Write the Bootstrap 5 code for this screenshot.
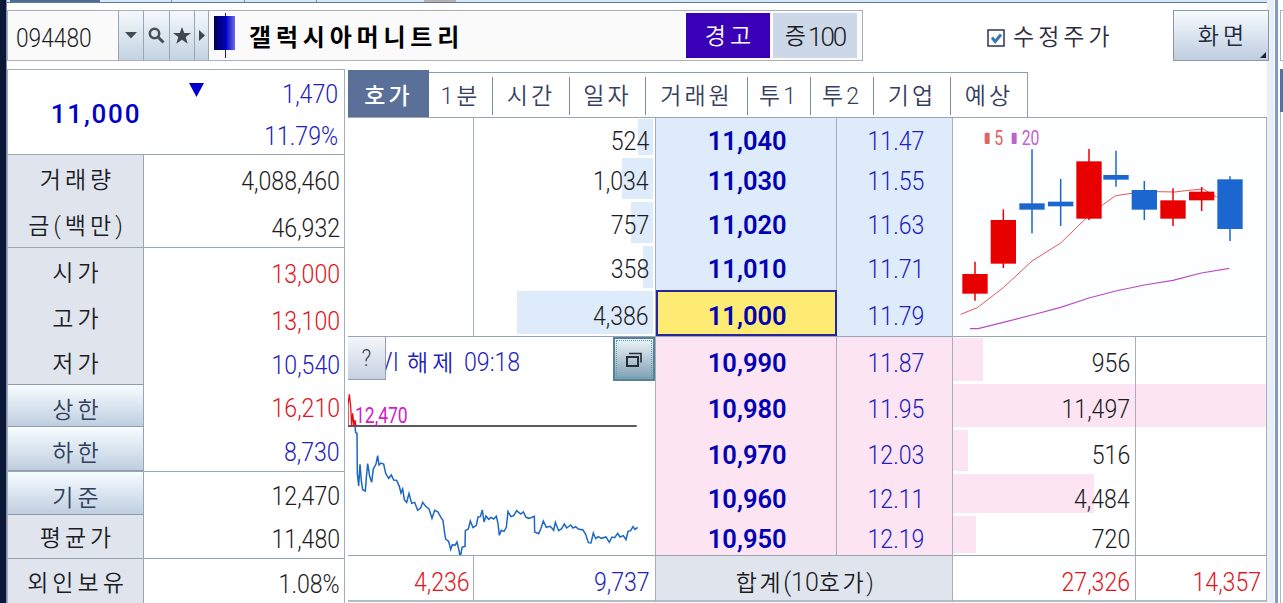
<!DOCTYPE html>
<html lang="ko">
<head>
  <meta charset="UTF-8">
  <title>갤럭시아머니트리 호가</title>
  <link href="https://cdn.jsdelivr.net/npm/bootstrap@5.3.0/dist/css/bootstrap.min.css" rel="stylesheet">
  <style>
    body {
        width: 1283px;
        height: 603px;
        overflow: hidden;
        background: #fff;
        color: #1b1c24;
        font-family: Roboto, "Noto Sans CJK KR", sans-serif;
        font-size: 26px;
        font-weight: 300;
        line-height: 30px;
    }

    svg { display: block; }

    .edge { width: 7px; background: #0b1736; border-right: 1px solid #7d8ba8; }
    .main { width: 1260px; }

    .top-strip { height: 3px; background: #d5e6f7; border-bottom: 1px solid #5f7c9f; }
    .top-strip .on { width: 90px; margin-left: 3px; background: #4f6d92; }
    .top-strip .tick { width: 1px; background: #8295ac; }

    .ko { font-size: 23px; font-weight: 350; letter-spacing: 4px; margin-right: -4px; white-space: nowrap; }
    .num { display: inline-block; transform: scaleX(.89); transform-origin: center; white-space: nowrap; }
    .num-end { transform-origin: right; }
    .num-start { transform-origin: left; }
    .up { color: #e0141c; }
    .down { color: #2222bb; }

    /* search bar */
    .bar { height: 51px; margin-top: 7px; }
    .item-box { width: 856px; border: 1px solid #a9b0b8; background: #fafafa; }
    .code { width: 110px; padding-left: 8px; }
    .tool {
        border-left: 1px solid #9aa6b4;
        background: linear-gradient(#f4f8fb, #c3d3e2);
    }
    .item-name { font-weight: 700; color: #000; margin-left: 13px; font-size: 24px; letter-spacing: 4.8px; }
    .flag-warn { width: 84px; height: 45px; padding-top: 2px; background: #3a00b8; color: #fff; margin-right: 3px; }
    .flag-rate { width: 84px; height: 45px; padding-top: 2px; background: #ccd8e7; margin-right: 5px; }
    .adjust { margin-left: 124px; color: #2c2c40; }
    .screen-btn {
        width: 96px;
        margin-left: auto;
        padding-top: 2px;
        border: 1px solid #8b98a8;
        background: linear-gradient(#f6fbfd, #bfcde0);
        color: #20283c;
        position: relative;
    }
    .screen-btn svg { position: absolute; right: 2px; bottom: 2px; }

    /* summary column */
    .summary { width: 338px; height: 534px; margin-top: 8px; border: 1px solid #a4adba; border-bottom: 0; }
    .quote { height: 84px; }
    .quote .price { width: 178px; color: #0000c8; font-weight: 500; letter-spacing: 1.8px; padding: 4px 2px 0 0; }
    .quote .arrow { width: 20px; padding: 13px 0 0 2px; }
    .quote .diff { padding: 3px 6px 0 0; line-height: 42px; }
    .sum-row { border-top: 1px solid transparent; }
    .sum-row.line { border-top-color: #9aa5b4; }
    .sum-row:not(.line) .sum-label { margin-top: -1px; }
    .sum-label { width: 136px; background: #e0e4ed; border-right: 1px solid #9aa5b4; }
    .sum-label.push { padding-top: 11px; background: linear-gradient(#f7fdff, #bfcee0); border-bottom: 1px solid #8f9bab; color: #30405c; }
    .sum-label.edge-top { border-top: 1px solid #8f9bab; }
    .sum-value { padding-right: 4px; }

    /* tabs */
    .board { width: 919px; margin: 10px 0 0 3px; }
    .board-tabs { height: 47px; border-bottom: 1px solid #9aa5b4; }
    .board-tab { height: 45px; margin-top: 1px; padding-top: 4px; border-top: 1px solid #8f9bb0; color: #34405e; }
    .board-tab .inner { height: 38px; border-right: 1px solid #7d8a9c; }
    .board-tab .ko { letter-spacing: 3px; margin-right: 0; padding-top: 1px; }
    .board-tab:last-child { border-right: 1px solid #8f9bb0; }
    .board-tab:last-child .inner { border-right: 0; }
    .board-tab.on { height: 47px; margin-top: -1px; border: 0; background: #5a7098; color: #fff; }
    .board-tab.on .inner { border: 0; padding-top: 4px; height: 41px; }
    .board-tab.on .ko { font-weight: 500; }

    /* order book */
    .bdr { border-right: 1px solid #a5aebb; }
    .half { height: 219px; border-bottom: 1px solid #9aa5b4; }
    .total { height: 46px; border-bottom: 2px solid #b3bccb; padding-top: 11px; }
    .col-l { width: 308px; }
    .col-m { width: 297px; }
    .col-r { width: 314px; }
    .lv { padding-top: 9px; }
    .lv:first-child { padding-top: 8px; }
    .lv:last-child { padding-top: 11px; }
    .bid .lv, #bidQty .lv { padding-top: 11px; }
    .bid .lv:last-child, #bidQty .lv:last-child { padding-top: 9px; }
    .qty { position: relative; z-index: 0; }
    .qty .fill { position: absolute; z-index: -1; top: 1px; bottom: 2px; }
    .ask-fill { right: 2px; background: #deebfa; }
    .bid-fill { left: 0; background: #fce4f2; }
    .ask { background: #deebfa; }
    .bid { background: #fce4f2; }
    .pr { color: #0000b4; font-weight: 600; }
    .pr .num { transform: translateX(1px) scaleX(.98); }
    .pct .num { transform: translateX(1px) scaleX(.89); }
    .now { background: #fdeb73; border: 2px solid #26269c; margin: 0 -1px 0 0; position: relative; z-index: 1; }
    .lv.now:last-child { padding-top: 9px; }
    .help-btn {
        width: 38px;
        height: 43px;
        background: linear-gradient(#f4f7fb, #c6d1e1);
        border: solid #94a0b0;
        border-width: 0 1px 1px 0;
        color: #3c4450;
        font-size: 24px;
        position: relative;
    }
    .pop-btn { width: 42px; height: 44px; border: 2px solid #5b7f95; background: linear-gradient(#eef4f8, #7fa0b4); }
    .pop-btn .dots { border: 1px dotted #3fa9bd; }

    /* divider and the neighbouring panel */
    .side { width: 16px; }
    .side .gap-strip { width: 7px; background: #e9eff7; }
    .side .rail { width: 3px; margin: 0 2px 0 1px; background: #8199cb; }
    .side .next { width: 3px; padding-top: 10px; }
    .side .next-bar { height: 51px; border: 1px solid #a9b0b8; border-right: 0; }
    .side .next-tab { height: 43px; margin-top: 8px; background: #5a7098; }
    .side .next-body { height: 491px; border-left: 1px solid #b0b6c0; }
  </style>
</head>
<body class="d-flex">
<div class="edge flex-shrink-0"></div>

<div class="main flex-shrink-0">
  <div class="top-strip d-flex">
    <div class="on"></div>
    <div class="tick" style="margin-left: 71px"></div>
    <div class="tick" style="margin-left: 72px"></div>
    <div class="tick" style="margin-left: 71px"></div>
    <div style="margin-left: 107px; width: 32px; background: #b5b2ae"></div>
  </div>

  <div class="bar d-flex" style="width: 1262px">
    <div class="item-box d-flex align-items-stretch">
      <div class="code d-flex align-items-center pt-1"><span class="num num-start" style="transform: scaleX(.875)">094480</span></div>
      <div class="tool d-flex align-items-center justify-content-center" style="width: 25px">
        <svg width="12" height="7"><path d="M0 0h12L6 6.500z" fill="#454b52"/></svg>
      </div>
      <div class="tool d-flex align-items-center justify-content-center" style="width: 26px">
        <svg width="17" height="17" fill="none" stroke="#4a5057"><circle cx="6.500" cy="6.500" r="4.700" stroke-width="2.500"/><path d="M10 10l5.500 5.500" stroke-width="3"/></svg>
      </div>
      <div class="tool d-flex align-items-center justify-content-center" style="width: 25px">
        <svg width="18" height="17"><path d="M9 0l2.300 6H18l-5.300 4 2 6.700L9 12.700 3.300 16.700l2-6.700L0 6h6.700z" fill="#40464e"/></svg>
      </div>
      <div class="tool d-flex align-items-center justify-content-center" style="width: 15px; border-right: 1px solid #9aa6b4">
        <svg width="6" height="11"><path d="M0 0v11L6 5.500z" fill="#40464e"/></svg>
      </div>
      <svg style="margin-left: 5px" width="22" height="49">
        <defs><linearGradient id="candle"><stop offset="0" stop-color="#00004e"/><stop offset=".55" stop-color="#0000c0"/><stop offset="1" stop-color="#6a6ae8"/></linearGradient></defs>
        <path d="M11.500 2v45" stroke="#1414d0"/>
        <rect y="5" width="21" height="34" fill="url(#candle)"/>
      </svg>
      <div class="ko item-name align-self-center pt-1">갤럭시아머니트리</div>
      <div class="flag-warn ms-auto align-self-center d-flex align-items-center justify-content-center"><span class="ko">경고</span></div>
      <div class="flag-rate align-self-center d-flex align-items-center justify-content-center">
        <span class="ko" style="margin: 0 2px 0 0; letter-spacing: 0">증</span><span style="letter-spacing: -2px">100</span>
      </div>
    </div>
    <div class="adjust d-flex align-items-center pt-1">
      <svg width="18" height="18" fill="none"><rect x="1" y="1" width="16" height="16" stroke="#39415a" stroke-width="1.600"/><path d="M5 8.500l3.200 4L14 5.500" stroke="#3579b4" stroke-width="3"/></svg>
      <span class="ko ms-2">수정주가</span>
    </div>
    <div class="screen-btn d-flex align-items-center justify-content-center">
      <span class="ko">화면</span>
      <svg width="6" height="6"><path d="M6 0v6H0z" fill="#1c2434"/></svg>
    </div>
  </div>

  <div class="d-flex">
    <div class="summary flex-shrink-0 d-flex flex-column">
      <div class="quote d-flex flex-shrink-0">
        <div class="price d-flex align-items-center justify-content-center">11,000</div>
        <div class="arrow"><svg width="17" height="15"><path d="M1 0h15L8.500 14z" fill="#0000cc"/></svg></div>
        <div class="diff down ms-auto text-end"><div class="num num-end d-block">1,470</div><div class="num num-end d-block">11.79%</div></div>
      </div>
      <div id="summaryRows"></div>
    </div>

    <div class="board flex-shrink-0">
      <div class="board-tabs d-flex" id="boardTabs"></div>

      <div class="d-flex">
        <div class="col-l bdr">
          <div class="half d-flex">
            <div class="bdr" style="width: 126px"></div>
            <div class="flex-grow-1" id="askQty"></div>
          </div>
          <div class="half">
            <div class="d-flex" style="height: 44px; line-height: 48px">
              <div class="help-btn d-flex align-items-center justify-content-center"><span class="num">?</span></div>
              <div class="down" style="margin-left: -8px; padding-top: 1px; z-index: -1"><span class="num num-start" style="letter-spacing: .5px">VI</span><span class="ko" style="margin-left: 5px">해제</span><span class="num num-start" style="margin-left: 11px">09:18</span></div>
              <div class="pop-btn ms-auto d-flex" style="padding: 1px">
                <div class="dots flex-grow-1 d-flex align-items-center justify-content-center">
                  <svg width="16" height="15" fill="none" stroke="#252d36"><rect x="1" y="5" width="11" height="9" stroke-width="2"/><path d="M3 1.500h12v9" stroke-width="1.600"/></svg>
                </div>
              </div>
            </div>
            <svg width="307" height="174" viewBox="9 -12 921 522" fill="none">
              <path d="M9 123H875" stroke="#222" stroke-width="4"/>
              <path d="M9 123V60l4-32 4 35 3 60 3-38 4 38 3-18 3 18" stroke="#e01018" stroke-width="4"/>
              <path d="M30 123l2 20 4 2 1 120 4 38 4-65 4 50 4 26 8 4 3-40 4-42 6 38 6 18 5-40 8-15 5-25 4 28 6-6 8 3 6 28 9 15 8-10 7 15 9 1 8 18 5 20 5-12 5 32 7 8 7-27 8 30 9-3 9 24 9-7 6-17 9 12 10 8 9 28 8-24 10 5 9 17 6 8 4 32 4 24 9 7 6 24 5-14 8 2 6-10 6 25 4 23 5-32 9-3 1-47 9-5 6-24 8 20 10-7 5-25 7-1 6-20 5 36 6-18 8 10 7-6 8 5 8-8 5 22 4 35 6-15 8 3 7-12 5-47 9 15 8-3 9-15 12 10 8-6 8 16 9 3 16-6 1 47 12 5 7-16 7-22 9 19 12-3 10 12 5-24 10 25 9-6 8-14 7 12 12-9 7 9 8-4 8 7 14 3 8 13 8 25 8 1 7-30 7 17 8-6 9 5 14-4 10 16 8-16 8 2 9-13 7 11 10-4 8 12 6-25 8-2 7-12 6 8 8-6" stroke="#1c66c4" stroke-width="4.500"/>
              <text x="30" y="113" font-size="64" font-weight="400" fill="#d21cc8" textLength="158" lengthAdjust="spacingAndGlyphs">12,470</text>
            </svg>
          </div>
          <div class="total d-flex">
            <div class="bdr text-end up" style="width: 126px; margin-top: -11px; padding: 11px 3px 0 0"><span class="num num-end">4,236</span></div>
            <div class="flex-grow-1 text-end down" style="padding-right: 5px"><span class="num num-end">9,737</span></div>
          </div>
        </div>

        <div class="col-m bdr">
          <div class="half ask d-flex">
            <div class="bdr" style="width: 181px" id="askPrice"></div>
            <div class="flex-grow-1" id="askRate"></div>
          </div>
          <div class="half bid d-flex">
            <div class="bdr" style="width: 181px" id="bidPrice"></div>
            <div class="flex-grow-1" id="bidRate"></div>
          </div>
          <div class="total text-center" style="background: #e0e4ed"><span class="ko" style="letter-spacing: 2.500px">합계<span style="letter-spacing: 0; font-size: 25px; font-weight: 300">(10</span>호가)</span></div>
        </div>

        <div class="col-r bdr">
          <div class="half">
            <svg width="313" height="218" viewBox="9 9 939 654" style="background: #fdfeff">
              <rect x="104" y="53" width="15" height="34" rx="3" fill="#e06464"/>
              <text x="133" y="89" font-size="58" font-weight="400" fill="#e06464" textLength="27" lengthAdjust="spacingAndGlyphs">5</text>
              <rect x="185" y="53" width="15" height="34" rx="3" fill="#bf62cc"/>
              <text x="215" y="89" font-size="58" font-weight="400" fill="#bf62cc" textLength="53" lengthAdjust="spacingAndGlyphs">20</text>
              <path d="M32 598L82 578 160 518 246 438 332 384 410 308 460 268 497 242 545 235 625 230 675 231 715 226 760 222 800 246" fill="none" stroke="#e05a5a" stroke-width="3"/>
              <path d="M60 641H84L160 622 246 600 332 577 417 549 497 528 583 510 669 496 754 474 838 460" fill="none" stroke="#b84cc4" stroke-width="3.500"/>
              <g id="candles"></g>
            </svg>
          </div>
          <div class="half" style="position: relative">
            <div id="bidQty" class="h-100"></div>
            <div style="position: absolute; left: 182px; top: 0; bottom: 0; border-left: 1px solid #a5aebb"></div>
          </div>
          <div class="total d-flex up">
            <div class="bdr text-end" style="width: 183px; margin-top: -11px; padding: 11px 5px 0 0"><span class="num num-end">27,326</span></div>
            <div class="flex-grow-1 text-end" style="padding-right: 5px"><span class="num num-end">14,357</span></div>
          </div>
        </div>
      </div>
    </div>
  </div>
</div>

<div class="side flex-shrink-0 d-flex">
  <div class="gap-strip flex-shrink-0"></div>
  <div class="rail flex-shrink-0"></div>
  <div class="next flex-shrink-0">
    <div class="next-bar"></div>
    <div class="next-tab"></div>
    <div class="next-body"></div>
  </div>
</div>

<script src="https://cdn.jsdelivr.net/npm/bootstrap@5.3.0/dist/js/bootstrap.bundle.min.js"></script>
<script>
  // label, value, row height, value class, pressed-button label, rule above
  const summary = [
      ['거래량', '4,088,460', 49, '', false, true],
      ['금(백만)', '46,932', 44, '', false, false],
      ['시가', '13,000', 48, 'up', false, true],
      ['고가', '13,100', 46, 'up', false, false],
      ['저가', '10,540', 43, 'down', false, false],
      ['상한', '16,210', 43, 'up', true, false],
      ['하한', '8,730', 44, 'down', true, false],
      ['기준', '12,470', 44, '', true, true],
      ['평균가', '11,480', 43, '', false, false],
      ['외인보유', '1.08%', 46, '', false, true]
  ];

  const tabs = [['호가', 81], ['1분', 64], ['시간', 77], ['일자', 76], ['거래원', 102], ['투1', 63], ['투2', 63], ['기업', 77], ['예상', 77]];

  // price, rate, quantity, bar width, row height
  const asks = [
      ['11,040', '11.47', '524', 15, 39],
      ['11,030', '11.55', '1,034', 31, 44],
      ['11,020', '11.63', '757', 22, 44],
      ['11,010', '11.71', '358', 10, 45],
      ['11,000', '11.79', '4,386', 136, 46]
  ];
  const bids = [
      ['10,990', '11.87', '956', 30, 46],
      ['10,980', '11.95', '11,497', 313, 46],
      ['10,970', '12.03', '516', 15, 44],
      ['10,960', '12.11', '4,484', 141, 42],
      ['10,950', '12.19', '720', 23, 40]
  ];

  // center x, high, body top, body bottom, low, color
  const red = '#e80000', blue = '#1c66d0';
  const candles = [
      [75, 440, 477, 536, 557, red],
      [160, 283, 315, 446, 459, red],
      [246, 103, 265, 284, 355, blue],
      [332, 192, 260, 274, 333, blue],
      [417, 102, 139, 311, 315, red],
      [498, 107, 180, 194, 215, blue],
      [583, 198, 225, 284, 315, blue],
      [669, 220, 256, 311, 333, red],
      [755, 216, 230, 256, 288, red],
      [840, 184, 193, 342, 378, blue]
  ];

  function fill(id, html) {
      document.getElementById(id).innerHTML = html;
  }

  fill('summaryRows', summary.map(([label, value, h, cls, push, line]) => `
      <div class="sum-row d-flex ${line ? 'line' : ''}" style="height: ${h}px">
          <div class="sum-label d-flex align-items-center justify-content-center ${push ? 'push' : 'pt-1'} ${label === '상한' ? 'edge-top' : ''}"><span class="ko">${label}</span></div>
          <div class="sum-value flex-grow-1 d-flex align-items-center justify-content-end pt-1 ${cls}"><span class="num num-end">${value}</span></div>
      </div>`).join(''));

  fill('boardTabs', tabs.map(([name, w], i) => `
      <div class="board-tab ${i === 0 ? 'on' : ''}" style="width: ${w}px">
          <div class="inner d-flex align-items-center justify-content-center"><span class="ko">${name}</span></div>
      </div>`).join(''));

  function renderPrices(side, rows) {
      fill(side + 'Price', rows.map(([price, , , , h]) => `
          <div class="lv pr text-center ${price === '11,000' ? 'now' : ''}" style="height: ${h}px"><span class="num">${price}</span></div>`).join(''));
      fill(side + 'Rate', rows.map(([, rate, , , h]) => `
          <div class="lv pct down text-center" style="height: ${h}px"><span class="num">${rate}</span></div>`).join(''));
      fill(side + 'Qty', rows.map(([, , qty, w, h]) => `
          <div class="lv qty text-end" style="height: ${h}px; padding-right: ${side === 'ask' ? 6 : 136}px">
              <div class="fill ${side}-fill" style="width: ${w}px"></div><span class="num num-end">${qty}</span>
          </div>`).join(''));
  }

  renderPrices('ask', asks);
  renderPrices('bid', bids);

  fill('candles', candles.map(([x, high, top, bottom, low, color]) => `
      <path d="M${x} ${high}V${low}" stroke="${color}" stroke-width="4.500"/>
      <rect x="${x - 38}" y="${top}" width="76" height="${bottom - top}" fill="${color}"/>`).join(''));
</script>
</body>
</html>
